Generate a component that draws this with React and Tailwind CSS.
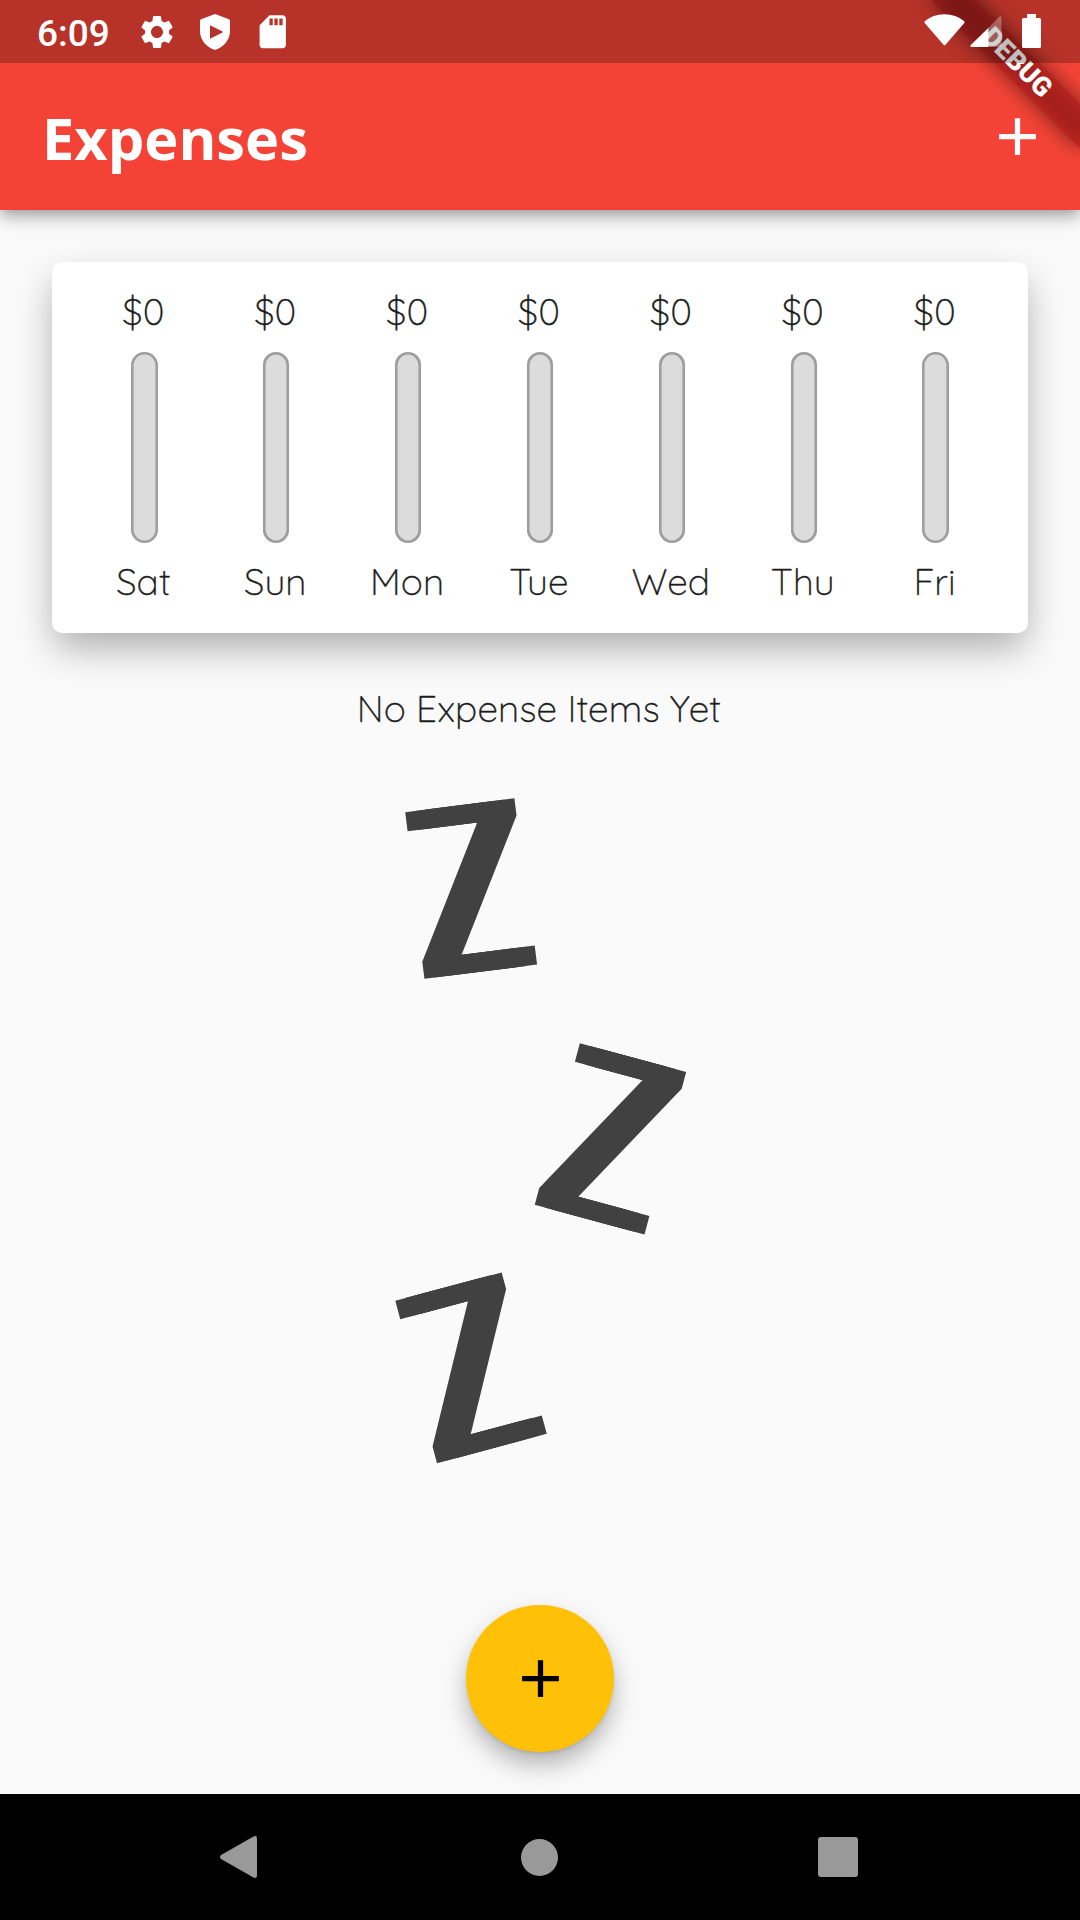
import { MdAdd, MdSettings, MdSdCard } from "react-icons/md";

const DAYS = [
  { day: "Sat", total: 0 },
  { day: "Sun", total: 0 },
  { day: "Mon", total: 0 },
  { day: "Tue", total: 0 },
  { day: "Wed", total: 0 },
  { day: "Thu", total: 0 },
  { day: "Fri", total: 0 },
];

const BODY_FONT =
  "font-['Quicksand','Inter',sans-serif] font-light text-[37px] leading-[46px] tracking-[0.1px] text-[#1c1c1c] [-webkit-text-stroke:0.35px_#1c1c1c] [font-feature-settings:'cv11'] whitespace-nowrap";

function DebugBanner() {
  return (
    <div className="absolute inset-0 overflow-hidden pointer-events-none">
      <div className="absolute left-[912px] top-[47.4px] h-[31.5px] w-[210px] rotate-45">
        <div className="absolute inset-0 bg-black/50 blur-[10px]" />
        <div className="absolute inset-0 flex items-center justify-center bg-[#b71c1c]/63 font-['Roboto',sans-serif] text-[26.8px] leading-none font-black text-white">
          DEBUG
        </div>
      </div>
    </div>
  );
}

function StatusBar() {
  return (
    <div className="relative flex h-[63px] items-start justify-between bg-black/25 text-white">
      <div className="flex items-start">
        <span className="ml-[37px] mt-[12px] w-[74px] font-['Roboto',sans-serif] text-[37px] leading-[43px] font-medium">
          6:09
        </span>
        <MdSettings className="ml-[26px] mt-[11.5px] size-[40px]" />
        <svg className="ml-[23px] mt-[13.5px] h-[36px] w-[30px]" viewBox="0 0 30 36.5" preserveAspectRatio="none" fill="currentColor">
          <path
            fillRule="evenodd"
            d="M15 0 29 5.3Q30 5.8 30 7V17.500C30 26 24 33.500 15 36.500 6 33.500 0 26 0 17.500V7Q0 5.800 1 5.300ZM10 11.500V25L23.500 18.200Z"
          />
        </svg>
        <MdSdCard className="ml-[22.500px] mt-[11.500px] size-[39.500px]" />
      </div>
      <div className="flex items-start pr-[39px]">
        <svg className="mt-[14px] h-[32px] w-[41px]" viewBox="0 0 41 32" fill="currentColor">
          <path d="M.8 7.200Q9 .3 20.500 .3T40.200 7.200Q41 8 40.300 9L21.500 30.800Q20.500 31.800 19.500 30.800L.7 9Q0 8 .8 7.200Z" />
        </svg>
        <svg className="ml-[5px] mt-[16px] h-[31px] w-[32px]" viewBox="0 0 32 31" fill="currentColor">
          <path opacity=".3" d="M18.500 11.800 29.300.8Q31.500-.6 31.500 2V29.500Q31.500 31 30 31H18.500Z" />
          <path d="M18.500 11.800V31H1.500Q-.5 30.500.8 28.900Z" />
        </svg>
        <svg className="ml-[20px] mt-[14px] h-[34px] w-[19px]" viewBox="0 0 19 34" fill="currentColor">
          <path d="M5 0H14V4H17.500Q19 4 19 5.500V32.500Q19 34 17.500 34H1.500Q0 34 0 32.500V5.500Q0 4 1.500 4H5Z" />
        </svg>
      </div>
    </div>
  );
}

function Header() {
  return (
    <header className="relative z-10 h-[210px] bg-[#f44336] shadow-[0_5px_10px_-3px_rgba(0,0,0,0.2),0_10px_13px_0_rgba(0,0,0,0.14),0_3px_26px_0_rgba(0,0,0,0.12)]">
      <DebugBanner />
      <StatusBar />
      <div className="flex h-[147px] items-center justify-between pl-[42px] pr-[31.500px] text-white">
        <h1 className="pt-[2px] font-['Open_Sans','Noto_Sans',sans-serif] text-[57.750px] leading-[78px] font-bold">
          Expenses
        </h1>
        <button aria-label="Add expense">
          <MdAdd className="size-[63px]" />
        </button>
      </div>
    </header>
  );
}

function ChartBar({ day, total }) {
  return (
    <div className="flex flex-1 flex-col items-center">
      <span className={BODY_FONT + " relative -left-px h-[46px]"}>${total}</span>
      <div className="mt-[18px] h-[191px] w-[26.250px] rounded-full bg-[#dcdcdc] shadow-[inset_0_0_0_2.600px_#9e9e9e]" />
      <span className={BODY_FONT + " relative -left-px mt-[15px] h-[46px]"}>{day}</span>
    </div>
  );
}

function Snore({ className }) {
  return (
    <div className={"h-[168px] w-[112px] " + className}>
      <span className="block origin-left translate-x-[-7.500px] translate-y-[4.400px] scale-x-[0.678] font-['DejaVu_Sans',sans-serif] text-[230px] leading-[168px] text-[#414141] [text-shadow:15px_0_0_#414141,30.500px_0_0_#414141]">
        Z
      </span>
    </div>
  );
}

export default function App() {
  return (
    <div className="flex h-[1920px] w-[1080px] flex-col overflow-hidden bg-[#fafafa]">
      <Header />
      <main className="flex flex-1 flex-col items-center">
        <section className="mt-[52px] flex h-[371px] w-[976px] shrink-0 rounded-[10.500px] bg-white px-[26.500px] pt-[26px] shadow-[0_17px_38px_-3px_rgba(0,0,0,0.32)]">
          {DAYS.map((d) => (
            <ChartBar key={d.day} {...d} />
          ))}
        </section>
        <p className={BODY_FONT + " relative -left-px mt-[52px] h-[46px]"}>No Expense Items Yet</p>
        <div className="mt-[73.500px] flex h-[650.500px] w-[260px] flex-col">
          <Snore className="ml-[3.600px] -rotate-[7.200deg]" />
          <Snore className="ml-[145px] mt-[82.500px] rotate-[15deg]" />
          <Snore className="ml-[3.600px] mt-[60.500px] -rotate-[15deg]" />
        </div>
        <button
          aria-label="Add expense"
          className="mt-[150px] flex h-[147px] w-[148px] shrink-0 items-center justify-center rounded-full bg-[#ffc107] text-black shadow-[0_13px_28px_-3px_rgba(0,0,0,0.34),0_2px_4px_-1px_rgba(0,0,0,0.12)]"
        >
          <MdAdd className="size-[63px]" />
        </button>
      </main>
      <nav className="flex h-[126px] shrink-0 items-center bg-black text-[#999999]">
        <svg className="ml-[220px] h-[42px] w-[37px]" viewBox="0 0 37 42" fill="currentColor">
          <path d="M1 19 33.500.5Q37-1 37 2.500V39.500Q37 43 33.500 41.500L1 23Q-1 21 1 19Z" />
        </svg>
        <div className="ml-[264px] size-[37px] rounded-full bg-[#999999]" />
        <div className="ml-[260px] size-[40px] rounded-[3px] bg-[#999999]" />
      </nav>
    </div>
  );
}
